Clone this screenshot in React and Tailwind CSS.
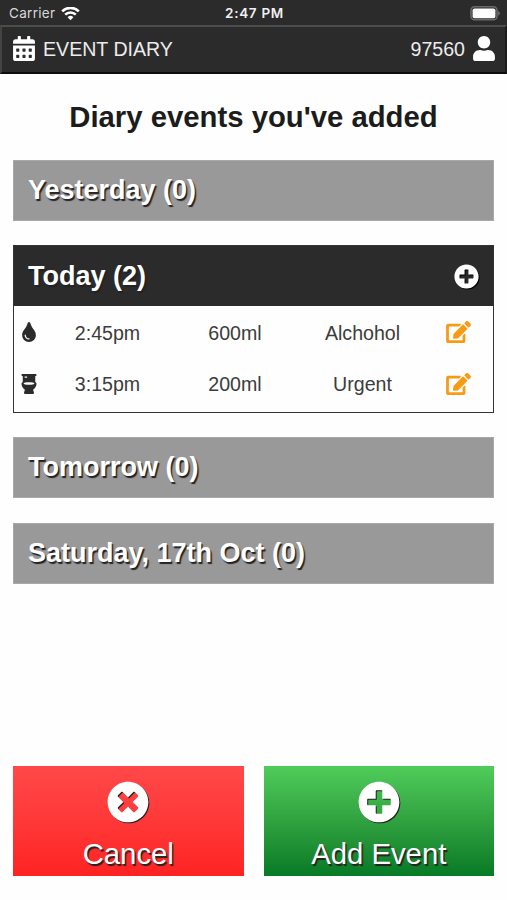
import React from 'react';
import { FaCalendarAlt, FaUser, FaTint, FaToilet, FaEdit, FaPlusCircle, FaTimesCircle } from 'react-icons/fa';

const days = [
  { title: 'Yesterday (0)', events: [] },
  {
    title: 'Today (2)',
    events: [
      { icon: FaTint, time: '2:45pm', amount: '600ml', note: 'Alchohol' },
      { icon: FaToilet, time: '3:15pm', amount: '200ml', note: 'Urgent' },
    ],
  },
  { title: 'Tomorrow (0)', events: [] },
  { title: 'Saturday, 17th Oct (0)', events: [] },
];

const StatusBar = () => (
  <div className="h-[25px] grid grid-cols-3 items-center pl-[9px] pr-[7px] pt-[2px] font-['Inter',sans-serif] text-[13.5px] leading-none">
    <div className="flex items-center gap-[6px] text-[#d8d8d8]">
      <span className="tracking-[0.3px]">Carrier</span>
      <svg width="19" height="14" viewBox="0 0 19 14" fill="none" stroke="#fff" strokeWidth="2.6">
        <path d="M1.2 4.3a11.800 11.800 0 0 1 16.600 0" />
        <path d="M4.200 7.700a7.500 7.500 0 0 1 10.600 0" />
        <path d="M9.500 13.200 6.600 10.200a4.100 4.100 0 0 1 5.800 0z" fill="#fff" stroke="none" />
      </svg>
    </div>
    <div className="text-center font-semibold text-[#f0f0f0] text-[13.5px] tracking-[0.7px]">2:47 PM</div>
    <div className="flex justify-end">
      <svg width="30" height="15" viewBox="0 0 30 15">
        <rect x="1" y="0.8" width="26" height="13" rx="3.5" fill="none" stroke="#6a6a6a" strokeWidth="1.6" />
        <rect x="2.6" y="2.4" width="22.8" height="9.8" rx="1.8" fill="#fff" />
        <path d="M28.200 5v4.600c1-.4 1.600-1.300 1.600-2.300S29.200 5.400 28.200 5z" fill="#777" />
      </svg>
    </div>
  </div>
);

const Header = () => (
  <div className="h-[49px] flex items-center justify-between border-2 border-t-[#4d4d4d] border-l-[#444] border-r-[#1b1b1b] border-b-[#0c0c0c] pl-[11px] pr-[10px] pb-[2px] text-[19.6px] text-[#ececec]">
    <div className="flex items-center gap-[8px]">
      <FaCalendarAlt className="w-[22px] h-[25px] text-white" />
      <span className="pt-[2px]">EVENT DIARY</span>
    </div>
    <div className="flex items-center gap-[8px]">
      <span className="pt-[2px]">97560</span>
      <FaUser className="w-[22px] h-[25px] text-white" />
    </div>
  </div>
);

const DayPanel = ({ title, events }) => {
  const active = events.length > 0;
  return (
    <div className={active ? 'border border-[#333]' : 'border border-[#a8a8a8]'}>
      <div
        className={`flex items-center justify-between pl-[14px] pr-[14px] text-[27px] leading-none font-bold text-white ${
          active ? 'h-[60px] bg-[#2b2b2b]' : 'h-[59px] bg-[#999]'
        }`}
      >
        <span className="[text-shadow:1.5px_1.5px_1px_#222]">{title}</span>
        {active && <FaPlusCircle className="w-[25px] h-[25px] [filter:drop-shadow(1px_1px_0_#000)]" />}
      </div>
      {active && (
        <div className="h-[105.5px] pb-[2px] flex flex-col">
          {events.map(({ icon: Icon, time, amount, note }) => (
            <div key={time} className="flex-1 flex items-center text-[19.6px] text-[#3c3c3c]">
              <div className="w-[30px] flex justify-center">
                <Icon className="w-[20px] h-[20px] text-[#2b2b2b]" />
              </div>
              <div className="w-[127px] pt-[2px] text-center">{time}</div>
              <div className="w-[128px] pt-[2px] text-center">{amount}</div>
              <div className="w-[127px] pt-[2px] text-center">{note}</div>
              <div className="flex-1 flex justify-center pr-[2px]">
                <FaEdit className="w-[25px] h-[22px] text-[#f99b12]" />
              </div>
            </div>
          ))}
        </div>
      )}
    </div>
  );
};

const ActionButton = ({ label, icon: Icon, className }) => (
  <button className={`flex-1 h-[110px] flex flex-col items-center pt-[15px] text-white ${className}`}>
    <Icon className="w-[42px] h-[42px] [filter:drop-shadow(1.5px_1.5px_0.5px_#222)]" />
    <span className="mt-[14px] text-[29.3px] leading-[34px] [text-shadow:1.5px_1.5px_1px_#222]">{label}</span>
  </button>
);

const App = () => (
  <div className="w-full h-[900px] flex flex-col bg-[#fefefe] font-['Liberation_Sans',Arial,sans-serif]">
    <div className="bg-[#2b2b2b]">
      <StatusBar />
      <Header />
    </div>

    <h1 className="mt-[25px] text-center text-[29.3px] leading-[36px] font-bold text-[#1c1c1c]">Diary events you've added</h1>

    {/* Days */}
    <div className="mt-[25px] px-[13px] flex flex-col gap-[24.4px]">
      {days.map((day) => (
        <DayPanel key={day.title} {...day} />
      ))}
    </div>

    {/* Footer actions */}
    <div className="mt-auto mb-[24px] px-[13px] flex gap-[20px]">
      <ActionButton label="Cancel" icon={FaTimesCircle} className="bg-linear-to-b from-[#ff4848] to-[#fe2222]" />
      <ActionButton label="Add Event" icon={FaPlusCircle} className="bg-linear-to-b from-[#50cc5a] to-[#057a26]" />
    </div>
  </div>
);

export default App;
